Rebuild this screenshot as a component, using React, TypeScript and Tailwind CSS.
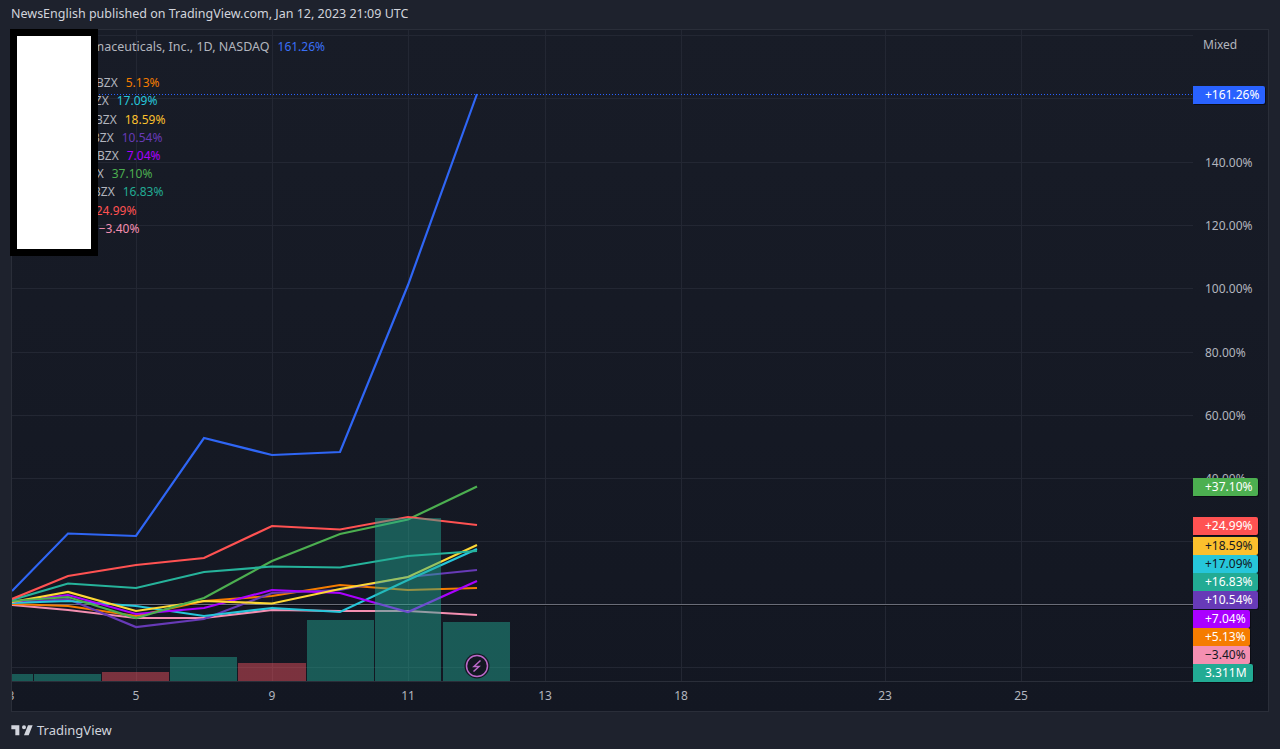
const font = "font-['Noto_Sans','Liberation_Sans',sans-serif]";

const xs = [12, 68, 136, 204, 272, 340, 408, 477];

const series = [
    { color: "#f48fb1", y: [605, 610, 618, 618, 610, 611, 611, 615] },
    { color: "#f57c00", y: [604, 606, 616, 601, 596, 585, 590, 588] },
    { color: "#673ab7", y: [603, 599, 627, 619, 593, 590, 577, 570] },
    { color: "#26c6da", y: [603, 601, 606, 616, 608, 612, 580, 549] },
    { color: "#aa00ff", y: [602, 595, 614, 608, 590, 593, 612, 581] },
    { color: "#fdd835", y: [602, 592, 611, 601, 603.5, 589, 577, 545] },
    { color: "#4caf50", y: [601, 597, 618, 598, 561, 534, 519.5, 486.5] },
    { color: "#26b39b", y: [600, 583.5, 588, 572, 566.5, 567.5, 556, 551] },
    { color: "#ff5252", y: [599, 576, 565, 558, 526, 529.5, 517, 525] },
    { color: "#2f66f5", y: [591, 533.5, 536, 438, 455, 452, 285, 94] },
];

const bars = [
    { x: 12, w: 21, top: 674, up: true },
    { x: 34, w: 67, top: 674, up: true },
    { x: 102, w: 67, top: 672, up: false },
    { x: 170, w: 67, top: 657, up: true },
    { x: 238, w: 68, top: 663, up: false },
    { x: 307, w: 67, top: 620, up: true },
    { x: 375, w: 66, top: 518, up: true },
    { x: 443, w: 67, top: 622, up: true },
];

const gridY = [35, 98, 162, 225, 288, 352, 415, 478, 541, 667];
const gridX = [136, 272, 408, 545, 681, 885, 1021];

const legend = [
    { ml: "ml-[84px]", value: "5.13%", text: "text-[#f57c00]" },
    { ml: "ml-[75px]", value: "17.09%", text: "text-[#26c6da]" },
    { ml: "ml-[83px]", value: "18.59%", text: "text-[#fbc02d]" },
    { ml: "ml-[80px]", value: "10.54%", text: "text-[#673ab7]" },
    { ml: "ml-[85px]", value: "7.04%", text: "text-[#aa00ff]" },
    { ml: "ml-[70px]", value: "37.10%", text: "text-[#4caf50]" },
    { ml: "ml-[81px]", value: "16.83%", text: "text-[#22ab94]" },
    { ml: "ml-[54px]", value: "24.99%", text: "text-[#ff5252]" },
    { ml: "ml-[57px]", value: "−3.40%", text: "text-[#f48fb1]" },
];

const axisTicks = [
    { label: "140.00%", top: "top-[124px]" },
    { label: "120.00%", top: "top-[187px]" },
    { label: "100.00%", top: "top-[250px]" },
    { label: "80.00%", top: "top-[314px]" },
    { label: "60.00%", top: "top-[377px]" },
    { label: "40.00%", top: "top-[440px]" },
    { label: "20.00%", top: "top-[503px]" },
];

const tags = [
    { label: "+161.26%", top: "top-[56px]", w: "w-[72px]", cls: "bg-[#2962ff] text-white" },
    { label: "+37.10%", top: "top-[448px]", w: "w-[65px]", cls: "bg-[#4caf50] text-white" },
    { label: "+24.99%", top: "top-[487px]", w: "w-[65px]", cls: "bg-[#ff5252] text-white" },
    { label: "+18.59%", top: "top-[507px]", w: "w-[65px]", cls: "bg-[#fbc02d] text-[#131722]" },
    { label: "+17.09%", top: "top-[525px]", w: "w-[65px]", cls: "bg-[#26c6da] text-[#131722]" },
    { label: "+16.83%", top: "top-[543px]", w: "w-[65px]", cls: "bg-[#22ab94] text-white" },
    { label: "+10.54%", top: "top-[561px]", w: "w-[65px]", cls: "bg-[#673ab7] text-white" },
    { label: "+7.04%", top: "top-[580px]", w: "w-[57px]", cls: "bg-[#aa00ff] text-white" },
    { label: "+5.13%", top: "top-[598px]", w: "w-[57px]", cls: "bg-[#f57c00] text-white" },
    { label: "−3.40%", top: "top-[616px]", w: "w-[57px]", cls: "bg-[#f48fb1] text-[#131722]" },
    { label: "3.311M", top: "top-[634px]", w: "w-[60px]", cls: "bg-[#22ab94] text-white" },
];

const timeLabels = [
    { label: "3", left: "left-[-13px]" },
    { label: "5", left: "left-[112px]" },
    { label: "9", left: "left-[248px]" },
    { label: "11", left: "left-[384px]" },
    { label: "13", left: "left-[521px]" },
    { label: "18", left: "left-[657px]" },
    { label: "23", left: "left-[861px]" },
    { label: "25", left: "left-[997px]" },
];

function ChartDrawing() {
    return (
        <svg className="block w-[1181px] h-[651px]" viewBox="12 30 1181 651">
            {/* grid */}
            {gridY.map((y) => (
                <line key={y} x1="12" x2="1193" y1={y + 0.5} y2={y + 0.5} stroke="#232733" />
            ))}
            {gridX.map((x) => (
                <line key={x} x1={x + 0.5} x2={x + 0.5} y1="30" y2="681" stroke="#232733" />
            ))}

            {/* zero line + last price */}
            <line x1="12" x2="1193" y1="604.5" y2="604.5" stroke="#6a6d78" />
            <line x1="12" x2="1193" y1="605.5" y2="605.5" stroke="#0b0d14" />
            <line x1="12" x2="1193" y1="94.5" y2="94.5" stroke="#2962ff" strokeDasharray="1 2" />

            {series.map((s) => (
                <polyline
                    key={s.color}
                    points={s.y.map((y, i) => `${xs[i]},${y}`).join(" ")}
                    fill="none"
                    stroke={s.color}
                    strokeWidth="2.2"
                />
            ))}

            {/* volume */}
            {bars.map((b) => (
                <rect
                    key={b.x}
                    x={b.x}
                    y={b.top}
                    width={b.w}
                    height={681 - b.top}
                    fill={b.up ? "#22ab94" : "#f7525f"}
                    fillOpacity="0.46"
                />
            ))}

            {/* earnings badge */}
            <circle cx="477" cy="666" r="12.5" fill="#131722" />
            <circle cx="477" cy="666" r="10.5" fill="#131722" stroke="#ba68c8" strokeWidth="1.5" />
            <path d="M480.5 660.5 L474 666.5 H479 L473.5 671.5" fill="none" stroke="#ba68c8" strokeWidth="1.5" />
        </svg>
    );
}

function Legend() {
    return (
        <div className="absolute left-0 top-[8px] text-[12px] leading-[18.2px] text-[#b2b5be] whitespace-nowrap">
            <div className="flex items-baseline gap-2 ml-[53px]">
                <span className="text-[12.5px]">Pharmaceuticals, Inc., 1D, NASDAQ</span>
                <span className="text-[#3a6ff5]">161.26%</span>
            </div>
            <div className="h-[18px]" />
            {legend.map((row) => (
                <div key={row.value} className={`flex gap-2 ${row.ml}`}>
                    <span>BZX</span>
                    <span className={row.text}>{row.value}</span>
                </div>
            ))}
        </div>
    );
}

export default function App() {
    return (
        <div className={`relative flex flex-col w-[1280px] h-[749px] overflow-hidden bg-[#1e222d] px-[11px] ${font}`}>
            {/* Header */}
            <div className="flex items-center h-[29px] shrink-0 text-[12.5px] text-[#d1d4dc] whitespace-nowrap">
                NewsEnglish published on TradingView.com, Jan 12, 2023 21:09 UTC
            </div>

            {/* Chart panel */}
            <div className="flex w-[1258px] h-[683px] shrink-0 border border-[#2a2e39] bg-gradient-to-b from-[#181c27] to-[#131722]">
                <div className="flex flex-col w-[1181px]">
                    <div className="relative h-[651px]">
                        <ChartDrawing />
                        <Legend />
                    </div>
                    <div className="relative h-[30px] border-t border-[#2a2e39] overflow-hidden text-[12px] text-[#b2b5be]">
                        {timeLabels.map((t) => (
                            <span key={t.label} className={`absolute top-[5px] w-[24px] text-center ${t.left}`}>
                                {t.label}
                            </span>
                        ))}
                    </div>
                </div>

                {/* Price axis */}
                <div className="relative flex-1 text-[12px] text-[#b2b5be]">
                    <span className="absolute left-[10px] top-[6px]">Mixed</span>
                    {axisTicks.map((t) => (
                        <span key={t.label} className={`absolute left-[12px] leading-[18px] ${t.top}`}>
                            {t.label}
                        </span>
                    ))}
                    {tags.map((t) => (
                        <div
                            key={t.label}
                            className={`absolute left-0 h-[18px] pl-[12px] leading-[18px] rounded-r-[2px] shadow-[1px_1px_0_#0b0d14] whitespace-nowrap ${t.top} ${t.w} ${t.cls}`}
                        >
                            {t.label}
                        </div>
                    ))}
                </div>
            </div>

            {/* Footer */}
            <div className="flex items-center gap-[3px] flex-1 text-[13px] text-[#d1d4dc]">
                <svg className="w-[24px] h-[19px] -ml-[1px]" viewBox="0 0 36 28" fill="#d1d4dc">
                    <path d="M14 6H2v6h6v9h6V6zm14 15h-7l6-15h7l-6 15zm-7-9a3 3 0 1 0 0-6 3 3 0 0 0 0 6z" />
                </svg>
                <span>TradingView</span>
            </div>

            {/* Redaction box */}
            <div className="absolute left-[10px] top-[29px] w-[88px] h-[227px] bg-black p-[7px]">
                <div className="w-full h-full bg-white" />
            </div>
        </div>
    );
}
